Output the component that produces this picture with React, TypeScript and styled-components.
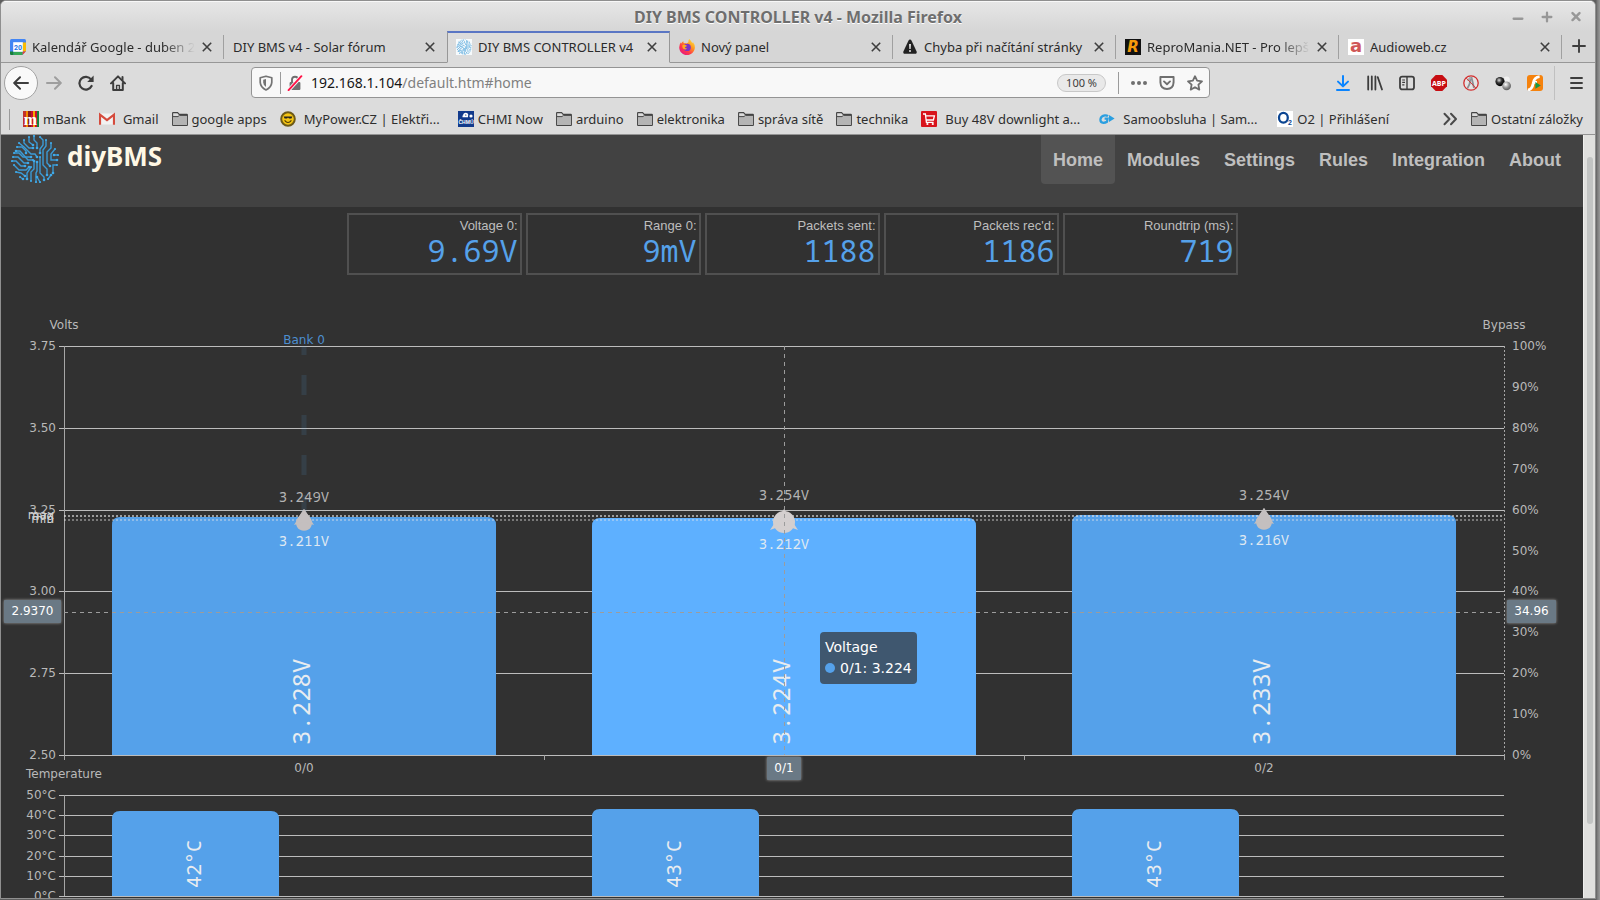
import React, { useEffect, useRef, useState } from "react";
import styled, { createGlobalStyle } from "styled-components";

const UI_FONT = `"Noto Sans", "Open Sans", sans-serif`;
const CHART_FONT = `"DejaVu Sans", Verdana, sans-serif`;
const MONO_FONT = `"Noto Mono", "Noto Sans Mono", "DejaVu Sans Mono", monospace`;
const BLUE = "#55a1ea";

const GlobalStyle = createGlobalStyle`
  * { box-sizing: border-box; }
  html, body { margin: 0; height: 100%; }
  body { background: #8e8e8e; overflow: hidden; font-family: ${UI_FONT}; }
  #root { height: 100%; }
  button, input { font: inherit; color: inherit; }
  button { border: 0; padding: 0; background: none; cursor: pointer; }
  a { color: inherit; text-decoration: none; }
`;

/* ---------- window ---------- */

const Desktop = styled.div`
  height: 100vh;
  padding: 0 4px 1px 0;
  background: linear-gradient(90deg, #5e5e5e calc(100% - 4px), #777 calc(100% - 3px), #999 100%);
`;

const BrowserWindow = styled.div`
  display: flex;
  flex-direction: column;
  height: 100%;
  border: 1px solid #8f8f8f;
  border-radius: 6px 6px 0 0;
  background: #dcdcdc;
  overflow: hidden;
`;

const TitleBar = styled.header`
  flex: none;
  position: relative;
  display: flex;
  align-items: center;
  justify-content: center;
  height: 30px;
  border-top: 1px solid #f8f8f8;
  background: linear-gradient(#e6e6e6, #d6d6d6);
`;

const WindowTitle = styled.h1`
  margin: 0;
  font-size: 16px;
  line-height: 30px;
  font-weight: 700;
  color: #6e6e6e;
  text-shadow: 0 1px 0 #fff;
`;

const WindowButtons = styled.div`
  position: absolute;
  right: 12px;
  top: 8px;
  display: flex;
  gap: 15px;
`;

const IconButton = styled.button<{ $size?: number }>`
  flex: none;
  display: flex;
  align-items: center;
  justify-content: center;
  width: ${(p) => p.$size ?? 16}px;
  height: ${(p) => p.$size ?? 16}px;
`;

/* ---------- tabs ---------- */

const TabStrip = styled.div`
  flex: none;
  display: flex;
  height: 32px;
  background: #d6d6d6;
`;

const Tab = styled.div<{ $active?: boolean; $noLine?: boolean }>`
  position: relative;
  flex: 0 1 223px;
  min-width: 0;
  display: flex;
  align-items: center;
  gap: 6px;
  padding: 0 11px 2px ${(p) => (p.$active ? 8 : 9)}px;
  font-size: 13px;
  color: #2b2b2b;
  background: ${(p) => (p.$active ? "#dcdcdc" : "transparent")};
  border-top: 2px solid ${(p) => (p.$active ? "#5a76c4" : "transparent")};
  border-bottom: 1px solid ${(p) => (p.$active ? "#dcdcdc" : "#979797")};
  ${(p) => p.$active && "border-left: 1px solid #979797; border-right: 1px solid #979797;"}

  &::after {
    content: "";
    display: ${(p) => (p.$active || p.$noLine ? "none" : "block")};
    position: absolute;
    right: 0;
    top: 2px;
    width: 1px;
    height: 24px;
    background: #a0a0a0;
  }
`;

const TabLabel = styled.button<{ $fade?: boolean }>`
  flex: 1;
  min-width: 0;
  height: 26px;
  overflow: hidden;
  white-space: nowrap;
  text-align: left;
  ${(p) => p.$fade && "mask-image: linear-gradient(90deg, #000 calc(100% - 32px), transparent);"}
`;

const NewTab = styled.div`
  flex: 1;
  display: flex;
  align-items: center;
  padding: 0 0 2px 9px;
  border-bottom: 1px solid #979797;
`;

/* ---------- toolbars ---------- */

const NavBar = styled.div`
  flex: none;
  display: flex;
  align-items: center;
  height: 39px;
  padding: 0 8px 0 3px;
`;

const NavButtons = styled.div`
  flex: none;
  display: flex;
  align-items: center;
  gap: 16px;
`;

const BackButton = styled(IconButton)`
  border: 1px solid #a2a2a2;
  border-radius: 50%;
  background: #f9f9f9;
  margin-right: -8px;
`;

const Spring = styled.div`
  flex: 1;
  max-width: 125px;
`;

const UrlBar = styled.form`
  flex: 1 1 959px;
  display: flex;
  align-items: center;
  gap: 12px;
  height: 31px;
  margin: 0 auto 0 0;
  padding: 0 6px;
  border: 1px solid #949494;
  border-radius: 4px;
  background: #f8f8f8;
  max-width: 959px;
`;

const Identity = styled.div`
  display: flex;
  align-items: center;
  gap: 6px;
`;

const UrlField = styled.label`
  flex: 1;
  position: relative;
  display: flex;
  margin-left: -4px;
  font-size: 14px;
  line-height: 22px;
`;

const UrlInput = styled.input`
  width: 100%;
  padding: 0;
  border: 0;
  background: none;
  color: transparent;
`;

const UrlText = styled.span`
  position: absolute;
  inset: 0;
  pointer-events: none;
  color: #808080;
  b { font-weight: 400; color: #161616; }
`;

const ZoomPill = styled.button`
  height: 18px;
  padding: 0 8px;
  border: 1px solid #c8c8c8;
  border-radius: 9px;
  background: #e9e9e9;
  font-size: 11px;
  line-height: 16px;
  color: #3c3c3c;
  white-space: nowrap;
`;

const Divider = styled.span<{ $h: number; $light?: boolean }>`
  flex: none;
  width: 1px;
  height: ${(p) => p.$h}px;
  background: ${(p) => (p.$light ? "#c0c0c0" : "#9b9b9b")};
`;

const Extensions = styled.div`
  flex: none;
  display: flex;
  align-items: center;
  gap: 16px;
  margin-left: 98px;
`;

const ExtensionsEnd = styled.div`
  flex: none;
  display: flex;
  align-items: center;
  gap: 13px;
  margin-left: 11px;
  padding-right: 3px;
`;

const Bookmarks = styled.nav`
  flex: none;
  display: flex;
  align-items: center;
  gap: 13px;
  height: 33px;
  padding: 2px 12px 0 8px;
  border-bottom: 1px solid #949494;
  font-size: 13px;
  line-height: 18px;
  color: #2e2e2e;
  white-space: nowrap;
`;

const Bookmark = styled.a<{ $gap?: number; $long?: boolean }>`
  flex: none;
  display: flex;
  align-items: center;
  gap: ${(p) => p.$gap ?? 4}px;
  width: ${(p) => (p.$long ? "165px" : "auto")};
`;

const BookmarkSpacer = styled.div`
  flex: 1;
`;

/* ---------- page ---------- */

const Viewport = styled.div`
  flex: 1;
  min-height: 0;
  display: flex;
  background: #e0e0de;
`;

const Page = styled.main`
  flex: 1;
  min-width: 0;
  overflow: hidden;
  background: #313131;
  font-family: "Liberation Sans", Arial, sans-serif;
`;

const PageHeader = styled.div`
  display: flex;
  justify-content: space-between;
  align-items: flex-start;
  height: 72px;
  padding: 0 10px;
  background: #424242;
`;

const Brand = styled.a`
  display: flex;
  align-items: flex-start;
  gap: 8px;
  font-family: ${UI_FONT};
  font-size: 26px;
  line-height: 42px;
  font-weight: 700;
  color: #fff8e5;
`;

const Menu = styled.nav`
  display: flex;
`;

const MenuLink = styled.a<{ $active?: boolean }>`
  height: 49px;
  padding: 0 12px;
  border-radius: 0 0 4px 4px;
  background: ${(p) => (p.$active ? "#535353" : "transparent")};
  font-size: 18px;
  line-height: 50px;
  font-weight: 700;
  color: #bfbfbf;
`;

const Stats = styled.dl`
  display: flex;
  justify-content: center;
  gap: 4px;
  margin: 0;
  padding-top: 6px;
`;

const Stat = styled.div`
  width: 175px;
  height: 62px;
  padding: 3px 2px;
  border: 2px solid #505050;
  text-align: right;
`;

const StatLabel = styled.dt`
  font-size: 13px;
  line-height: 15px;
  color: #bebebe;
`;

const StatValue = styled.dd`
  margin: 0;
  font-family: ${MONO_FONT};
  font-size: 30px;
  line-height: 36px;
  color: ${BLUE};
`;

const Scrollbar = styled.div`
  flex: none;
  width: 12px;
  padding: 22px 3px 0;
  border-left: 1px solid #efefed;
`;

const ScrollThumb = styled.div`
  width: 6px;
  height: 90%;
  border-radius: 3px;
  background: #c2c4c3;
`;

const ChartArea = styled.section`
  position: relative;
  svg { display: block; }
`;

const Tooltip = styled.div`
  position: absolute;
  top: 357px;
  padding: 5px;
  border-radius: 4px;
  background: rgba(50, 50, 50, 0.7);
  font-family: ${CHART_FONT};
  font-size: 14px;
  line-height: 21px;
  color: #fff;
  white-space: nowrap;
`;

const TooltipDot = styled.span`
  display: inline-block;
  width: 10px;
  height: 10px;
  margin-right: 5px;
  border-radius: 50%;
  background: ${BLUE};
`;

/* ---------- icons ---------- */

const Close = () => (
  <svg width="10" height="10" viewBox="0 0 10 10">
    <path d="M.8.8l8.4 8.4M9.2.8L.8 9.2" stroke="#3f3f3f" strokeWidth="1.6" />
  </svg>
);

const Folder = () => (
  <svg width="16" height="16" viewBox="0 0 16 16">
    <path d="M.6 13.9V2.1Q.6 1.6 1.1 1.6H5.6L7.2 3.4H14.9Q15.4 3.4 15.4 3.9V13.9Q15.4 14.4 14.9 14.4H1.1Q.6 14.4.6 13.9Z" fill="#dcdcdc" stroke="#444" strokeWidth="1.1" />
    <path d="M1 6H6.2L7.6 4.6H15V14H1Z" fill="#b4b4b4" />
    <path d="M1 5.6H6L7.4 4.4H15" fill="none" stroke="#444" />
  </svg>
);

const CalendarIcon = () => (
  <svg width="16" height="16" viewBox="0 0 16 16">
    <rect width="16" height="16" rx="1.5" fill="#4285f4" />
    <path d="M12.6 3.4H16V12.6H12.6Z" fill="#fbbc04" />
    <path d="M3.4 12.6H12.6V16H3.4Z" fill="#34a853" />
    <path d="M0 12.6H3.4V16H1.5Q0 16 0 14.5Z" fill="#188038" />
    <path d="M12.6 12.6H16L12.6 16Z" fill="#ea4335" />
    <path d="M16 12.6V16H12.6Z" fill="#dcdcdc" />
    <rect x="3.2" y="3.2" width="9.6" height="9.6" fill="#fff" />
    <text x="8" y="10.6" textAnchor="middle" fontSize="7" fontWeight="700" fontFamily="Roboto, sans-serif" fill="#1a73e8">20</text>
  </svg>
);

const FirefoxIcon = () => (
  <svg width="16" height="16" viewBox="0 0 16 16">
    <defs>
      <linearGradient id="ff" x1="1" y1="0" x2="0.2" y2="1">
        <stop offset="0" stopColor="#fff44f" />
        <stop offset=".4" stopColor="#ff9a1f" />
        <stop offset=".7" stopColor="#ff3b47" />
        <stop offset="1" stopColor="#e31587" />
      </linearGradient>
    </defs>
    <path d="M10.2 0C12 1.3 12.2 2.6 13 3.4Q14 4 14.1 3.2Q16 5.6 15.9 8.4C15.7 12.8 12.2 16 8 16S.1 12.6.2 8.2Q.2 5 2 3.2L2.4 4.4Q3.2 2.8 4.4 2.2Q4.2 3.6 5 4.2Q6.6 3.8 7.6 4.4L9.4 3.2Q9.2 1.2 10.2 0Z" fill="url(#ff)" />
    <circle cx="8.2" cy="8.4" r="3.6" fill="#7a35c8" />
    <path d="M3.4 6.2Q5.4 5 8 6.8Q7.2 8 5.8 8Q6.2 9.8 8.2 9.6Q6 11.4 4 9.4Q3 8 3.4 6.2Z" fill="#ffab1f" />
  </svg>
);

const WarningIcon = () => (
  <svg width="16" height="16" viewBox="-1 -1 16 16">
    <path d="M7 -.4Q8 -.4 8.6 .8L13.6 11.4Q14.2 13.8 12 13.8H2Q-.2 13.8.4 11.4L5.4 .8Q6 -.4 7 -.4Z" fill="#222" />
    <path d="M6 4H8L7.7 9H6.3Z" fill="#ddd" />
    <circle cx="7" cy="11" r="1.1" fill="#ddd" />
  </svg>
);

const LetterIcon = ({ bg, fg, ch, italic, size = 15 }: { bg: string; fg: string; ch: string; italic?: boolean; size?: number }) => (
  <svg width="16" height="16" viewBox="0 0 16 16">
    <rect width="16" height="16" fill={bg} />
    <text x="8" y="13" textAnchor="middle" fontSize={size} fontWeight="900" fontStyle={italic ? "italic" : "normal"} fontFamily="'DejaVu Sans', sans-serif" fill={fg}>{ch}</text>
  </svg>
);

const MBankIcon = () => (
  <svg width="16" height="16" viewBox="0 0 16 16">
    <rect width="16" height="16" fill="#c8102e" />
    <rect width="3" height="16" fill="#c4302b" />
    <rect x="3" width="2" height="16" fill="#f08a00" />
    <rect x="5" width="3" height="16" fill="#8b1a1a" />
    <rect x="10" width="2" height="16" fill="#f6a800" />
    <rect x="14" width="2" height="16" fill="#12833c" />
    <text x="7.5" y="14" textAnchor="middle" fontSize="16" fontWeight="700" fontFamily="'Liberation Serif', serif" fill="#fff">m</text>
  </svg>
);

const GmailIcon = () => (
  <svg width="16" height="16" viewBox="0 0 16 16">
    <path d="M1 2.5H15V13.5H1Z" fill="#f2f2f2" />
    <path d="M1 13.8V3.6L8 9.2L15 3.6V13.8" fill="none" stroke="#d54b3d" strokeWidth="2.2" />
  </svg>
);

const SmileIcon = () => (
  <svg width="16" height="16" viewBox="0 0 16 16">
    <circle cx="8" cy="8" r="6.8" fill="#f4c414" stroke="#6d5a17" strokeWidth="2" />
    <path d="M3.6 5.4H12.4L11.4 7.6H9L8 6.4L7 7.6H4.6Z" fill="#222" />
    <path d="M4.6 9.4Q8 13.6 11.4 9.4" fill="none" stroke="#4b3a00" strokeWidth="1.1" />
  </svg>
);

const ChmiIcon = () => (
  <svg width="16" height="16" viewBox="0 0 16 16">
    <rect width="16" height="16" fill="#123a8c" />
    <path d="M4.5 5.4H10M6 4.4A1.6 1.6 0 019.4 4.4" stroke="#fff" strokeWidth="1.8" fill="none" />
    <circle cx="13" cy="5" r="1.6" fill="#fff" />
    <text x="8" y="13" textAnchor="middle" fontSize="5" fontWeight="700" fontFamily="'Liberation Sans', sans-serif" fill="#fff">ČHMÚ</text>
  </svg>
);

const CartIcon = () => (
  <svg width="16" height="16" viewBox="0 0 16 16">
    <rect width="16" height="16" rx="1" fill="#d8141c" />
    <path d="M2 3H4.4L5.4 11.4H12.6M4.8 4.8H13.4L12.4 9H5.2" fill="none" stroke="#fff" strokeWidth="1.3" />
    <circle cx="6.4" cy="13" r="1.1" fill="#fff" />
    <circle cx="11.8" cy="13" r="1.1" fill="#fff" />
  </svg>
);

const GPlayIcon = () => (
  <svg width="16" height="16" viewBox="0 0 16 16">
    <path d="M9 5.2Q7.8 4.2 5.8 4.4Q2 4.8 1.4 8.2Q1.2 11.6 4.4 11.8Q6.4 11.8 8 10.8L8.6 7.6H5.6" fill="none" stroke="#2b9fe0" strokeWidth="2.2" />
    <path d="M10 4L15.6 7.4L10 11Z" fill="#2b9fe0" />
  </svg>
);

const O2Icon = () => (
  <svg width="16" height="16" viewBox="0 0 16 16">
    <rect width="16" height="16" fill="#fff" />
    <ellipse cx="6.4" cy="6.8" rx="4.4" ry="4.9" fill="none" stroke="#0b4592" strokeWidth="2.3" />
    <text x="13" y="14.4" textAnchor="middle" fontSize="7" fontWeight="700" fontFamily="'Liberation Sans', sans-serif" fill="#0b4592">2</text>
  </svg>
);

const TRACES: number[][][] = [
  [[3, 18], [8, 18], [12, 22], [20, 22]],
  [[2, 22], [7, 22], [13, 28], [17, 28]],
  [[1, 26], [5, 26], [10, 31], [14, 31]],
  [[3, 30], [8, 35], [15, 35], [18, 32]],
  [[6, 12], [11, 12], [15, 16], [15, 18]],
  [[8, 8], [13, 12], [20, 19], [24, 19], [26, 22]],
  [[13, 5], [13, 8], [18, 13], [22, 13]],
  [[18, 2], [18, 7], [22, 10]],
  [[23, 1], [23, 5], [26, 8], [26, 13]],
  [[29, 2], [32, 5], [32, 10], [29, 14], [29, 18]],
  [[35, 5], [35, 11], [32, 15], [32, 30], [36, 34], [36, 40]],
  [[40, 8], [40, 13], [36, 17], [36, 28], [39, 31]],
  [[44, 14], [40, 19], [40, 25], [46, 25]],
  [[47, 20], [43, 20]],
  [[46, 30], [42, 30], [42, 38]],
  [[5, 37], [10, 38], [14, 41]],
  [[22, 25], [17, 25], [9, 16], [5, 16]],
  [[20, 32], [16, 38], [16, 44]],
  [[20, 46], [20, 37], [23, 34], [23, 26]],
  [[25, 47], [25, 38], [26, 36], [26, 27]],
  [[29, 22], [29, 38], [33, 42], [33, 45]],
  [[29, 47], [26, 42]],
  [[37, 44], [40, 40]],
  [[9, 42], [12, 44]],
];

const BrandLogo = ({ size = 48 }: { size?: number }) => (
  <svg width={size} height={size} viewBox="0 0 48 48" fill="none" stroke="#3b9bd6" strokeWidth="1.4">
    {TRACES.map((t, i) => (
      <React.Fragment key={i}>
        <polyline points={t.map((p) => p.join(",")).join(" ")} />
        <circle cx={t[0][0]} cy={t[0][1]} r="1.1" fill="#3fa9e8" stroke="none" />
        <circle cx={t[t.length - 1][0]} cy={t[t.length - 1][1]} r="1.3" fill="#3fa9e8" stroke="none" />
      </React.Fragment>
    ))}
  </svg>
);

const BrandFavicon = () => (
  <svg width="16" height="16" viewBox="0 0 48 48" fill="none" stroke="#7fbde4" strokeWidth="3">
    <rect width="48" height="48" fill="#f6fafc" stroke="none" />
    {TRACES.map((t, i) => (
      <polyline key={i} points={t.map((p) => p.join(",")).join(" ")} />
    ))}
  </svg>
);

const line = (d: string, color = "#3d3d3d", w = 2, size = 16) => (
  <svg width={size} height={size} viewBox="0 0 16 16" fill="none" stroke={color} strokeWidth={w} strokeLinecap="round" strokeLinejoin="round">
    <path d={d} />
  </svg>
);

const HomeIcon = () => (
  <svg width="16" height="16" viewBox="0 0 16 16" fill="none" stroke="#3d3d3d" strokeWidth="2" strokeLinejoin="round" strokeLinecap="round">
    <path d="M1 8.4L8 1.4L15 8.4M3.2 8V15H12.8V8" />
    <path d="M6.6 14.5V10.4H9.4V14.5" strokeWidth="1.4" />
    <path d="M12.5 2V5" />
  </svg>
);

const ReloadIcon = () => (
  <svg width="16" height="16" viewBox="0 0 16 16" fill="none" stroke="#3d3d3d" strokeWidth="2.2">
    <path d="M13.6 11A6.4 6.4 0 1113 4.4" strokeLinecap="round" />
    <path d="M15.6 .6V7H9.2Z" fill="#3d3d3d" stroke="none" />
  </svg>
);

const ShieldIcon = () => (
  <svg width="16" height="16" viewBox="0 0 16 16" fill="none" stroke="#747474" strokeWidth="1.7">
    <path d="M8 1.2L13.8 2.8V7.4Q13.4 12.4 8 15Q2.6 12.4 2.2 7.4V2.8Z" strokeLinejoin="round" />
    <path d="M8 4V12Q5.4 10.4 5.2 7.4V4.8Z" fill="#747474" stroke="none" />
  </svg>
);

const LockIcon = () => (
  <svg width="16" height="16" viewBox="0 0 16 16" fill="none">
    <rect x="2.6" y="7" width="10.8" height="8" rx="1" fill="#6f6f6f" />
    <path d="M5 7V4.6Q5 1.8 8 1.8Q11 1.8 11 4.6V7" stroke="#6f6f6f" strokeWidth="1.9" />
    <path d="M1.6 15.2L14.4 1.2" stroke="#f8f8f8" strokeWidth="3.6" />
    <path d="M1.6 15.2L14.4 1.2" stroke="#ff1447" strokeWidth="1.9" strokeLinecap="round" />
  </svg>
);

const DotsIcon = () => (
  <svg width="16" height="16" viewBox="0 0 16 16" fill="#6f6f6f">
    <circle cx="2" cy="8" r="2" /><circle cx="8" cy="8" r="2" /><circle cx="14" cy="8" r="2" />
  </svg>
);

const LibraryIcon = () => (
  <svg width="16" height="16" viewBox="0 0 16 16" stroke="#3d3d3d" strokeWidth="1.8" strokeLinecap="round">
    <path d="M1.2 1.5V14.5M4.8 1.5V14.5M8.4 1.5V14.5M10.8 2.2L15 14.5" />
  </svg>
);

const SidebarIcon = () => (
  <svg width="16" height="16" viewBox="0 0 16 16" fill="none" stroke="#3d3d3d" strokeWidth="1.8">
    <rect x="1" y="1.6" width="14" height="12.8" rx="2.2" />
    <path d="M8 2V14" strokeWidth="1.4" />
    <path d="M3.2 5H6M3.2 7.4H6M3.2 9.8H5.4" strokeWidth="1.2" />
  </svg>
);

const AbpIcon = () => (
  <svg width="16" height="16" viewBox="0 0 16 16">
    <path d="M4.7 0H11.3L16 4.7V11.3L11.3 16H4.7L0 11.3V4.7Z" fill="#c70d12" />
    <text x="8" y="10.5" textAnchor="middle" fontSize="7" fontWeight="700" fontFamily="'Open Sans', sans-serif" fill="#fff">ABP</text>
  </svg>
);

const BlockIcon = () => (
  <svg width="16" height="16" viewBox="0 0 16 16" fill="none">
    <circle cx="8" cy="8" r="7" fill="#e6e4e4" />
    <path d="M7.6 2L6.6 9L4.4 13.4M8.4 2L11 13" stroke="#8d8f93" strokeWidth="1.8" />
    <path d="M4.4 5.6L8 2.6" stroke="#a9abb0" strokeWidth="2" />
    <circle cx="8" cy="8" r="7.2" stroke="#d22f2f" strokeWidth="1.3" />
    <path d="M3.2 3L12.8 13" stroke="#d22f2f" strokeWidth=".9" />
  </svg>
);

const SpheresIcon = () => (
  <svg width="16" height="16" viewBox="0 0 16 16">
    <defs>
      <radialGradient id="dark" cx=".4" cy=".35" r=".6"><stop offset="0" stopColor="#ddd" /><stop offset=".5" stopColor="#333" /><stop offset="1" stopColor="#000" /></radialGradient>
      <radialGradient id="grey" cx=".4" cy=".35" r=".6"><stop offset="0" stopColor="#fff" /><stop offset=".6" stopColor="#999" /><stop offset="1" stopColor="#666" /></radialGradient>
    </defs>
    <circle cx="11.6" cy="4.6" r="3.2" fill="#f1f1f1" />
    <circle cx="5" cy="6.6" r="4.6" fill="url(#dark)" />
    <circle cx="11.6" cy="10.8" r="4.4" fill="url(#grey)" />
  </svg>
);

const FlashIcon = () => (
  <svg width="16" height="16" viewBox="0 0 16 16">
    <rect width="16" height="16" rx="3" fill="#f5820d" />
    <path d="M1 15Q5 14.4 6 9Q7 2 12.6 1.6M5.4 7.4H10" stroke="#fff" strokeWidth="2.8" fill="none" />
    <path d="M8.4 7L13.8 10.4L8.4 13.8Z" fill="#149a46" />
  </svg>
);

/* ---------- chart ---------- */

const CELLS = [
  { name: "0/0", volts: 3.228, max: "3.249V", min: "3.211V", temp: 42 },
  { name: "0/1", volts: 3.224, max: "3.254V", min: "3.212V", temp: 43, hover: true },
  { name: "0/2", volts: 3.233, max: "3.254V", min: "3.216V", temp: 43 },
];

const PLOT = { left: 63, rightPad: 79, top: 71, bottom: 480, tempTop: 520, tempBottom: 621 };
const CHART_HEIGHT = 640;

const voltY = (v: number) => Math.round(PLOT.bottom - ((v - 2.5) / 1.25) * (PLOT.bottom - PLOT.top));
const tempY = (t: number) => Math.round(PLOT.tempBottom - (t / 50) * (PLOT.tempBottom - PLOT.tempTop));

const roundedBar = (x: number, y: number, w: number, bottom: number) =>
  `M${x} ${bottom}V${y + 8}Q${x} ${y} ${x + 8} ${y}H${x + w - 8}Q${x + w} ${y} ${x + w} ${y + 8}V${bottom}Z`;

function useWidth(initial: number) {
  const ref = useRef<HTMLElement>(null);
  const [width, setWidth] = useState(initial);
  useEffect(() => {
    if (!ref.current) return;
    const update = () => ref.current && setWidth(ref.current.clientWidth);
    update();
    const observer = new ResizeObserver(update);
    observer.observe(ref.current);
    return () => observer.disconnect();
  }, []);
  return [ref, width] as const;
}

const AxisBadge = ({ x, y, w, label }: { x: number; y: number; w: number; label: string }) => (
  <g>
    <rect x={x} y={y} width={w} height="23" rx="1" fill="#6a7985" filter="url(#badgeShadow)" />
    <text x={x + w / 2} y={y + 15} textAnchor="middle" fill="#fff">{label}</text>
  </g>
);

/* Max/min marker: a drop normally, a full disc while its cell is hovered; both carry two small wings. */
const Marker = ({ x, y, hover }: { x: number; y: number; hover?: boolean }) =>
  hover ? (
    <g fill="#d4cfcf">
      <circle cx={x} cy={y} r="11" />
      <path d={`M${x} ${y - 13}L${x + 14} ${y + 8}L${x} ${y + 3}L${x - 14} ${y + 8}Z`} />
    </g>
  ) : (
    <g fill="#c4bfbf">
      <path d={`M${x} ${y - 12}L${x + 7} ${y - 2}A8 8 0 1 1 ${x - 7} ${y - 2}Z`} />
      <path d={`M${x} ${y - 12}L${x + 10} ${y + 4}L${x} ${y + 1}L${x - 10} ${y + 4}Z`} />
    </g>
  );

const CellChart = () => {
  const [ref, width] = useWidth(1582);
  const right = width - PLOT.rightPad;
  const band = (right - PLOT.left) / CELLS.length;
  const barWidth = Math.round(band * 0.8);
  const tempWidth = Math.round(band * 0.347);
  const pointerY = 337;
  const pointerX = Math.round(PLOT.left + band * 1.5);
  const { left, top, bottom } = PLOT;

  return (
    <ChartArea ref={ref}>
      <svg width={width} height={CHART_HEIGHT} fontFamily={CHART_FONT} fontSize="12" fill="#b9b9b9">
        <defs>
          <filter id="badgeShadow" x="-20%" y="-30%" width="140%" height="160%">
            <feDropShadow dx="0" dy="0" stdDeviation="1.5" floodColor="#aaa" floodOpacity=".9" />
          </filter>
        </defs>

        <text x={left} y="54" textAnchor="middle">Volts</text>
        <text x={right} y="54" textAnchor="middle">Bypass</text>
        <text x={left} y="503" textAnchor="middle">Temperature</text>

        {[3.75, 3.5, 3.25, 3, 2.75, 2.5].map((v) => (
          <g key={v}>
            <line x1={left - 5} x2={right} y1={voltY(v)} y2={voltY(v)} stroke="#bcbcbc" shapeRendering="crispEdges" />
            <text x={left - 8} y={voltY(v) + 4} textAnchor="end">{v.toFixed(2)}</text>
          </g>
        ))}
        {[0, 10, 20, 30, 40, 50, 60, 70, 80, 90, 100].map((p) => (
          <text key={p} x={right + 8} y={Math.round(bottom - (p / 100) * (bottom - top)) + 4}>{p}%</text>
        ))}
        {[0, 10, 20, 30, 40, 50].map((t) => (
          <g key={t}>
            <line x1={left - 5} x2={right} y1={tempY(t)} y2={tempY(t)} stroke="#bcbcbc" shapeRendering="crispEdges" />
            <text x={left - 8} y={tempY(t) + 4} textAnchor="end">{t}°C</text>
          </g>
        ))}
        <g stroke="#a6a6a6" shapeRendering="crispEdges">
          <line x1={left} x2={left} y1={top} y2={bottom + 5} />
          <line x1={left} x2={left} y1={PLOT.tempTop} y2={PLOT.tempBottom} />
          <line x1={right} x2={right} y1={top} y2={bottom} strokeDasharray="2 2" />
          {[1, 2, 3].map((i) => (
            <line key={i} x1={Math.round(left + band * i)} x2={Math.round(left + band * i)} y1={bottom} y2={bottom + 5} />
          ))}
        </g>

        <line x1={left + band / 2} x2={left + band / 2} y1={bottom} y2={top} stroke={BLUE} strokeOpacity=".12" strokeWidth="5" strokeDasharray="20 20" />
        <text x={left + band / 2} y="69" textAnchor="middle" fill="#4d8fd0">Bank 0</text>

        {CELLS.map((c, i) => {
          const x = Math.round(left + band * i + band * 0.1);
          const fill = c.hover ? "#5eb0ff" : BLUE;
          return (
            <g key={c.name}>
              <path d={roundedBar(x, voltY(c.volts), barWidth, bottom)} fill={fill} />
              <path d={roundedBar(x, tempY(c.temp), tempWidth, PLOT.tempBottom)} fill={BLUE} />
            </g>
          );
        })}

        <g stroke="#e6e6e6" strokeDasharray="2 2" strokeWidth="2">
          <line x1={left} x2={right} y1="241" y2="241" strokeOpacity=".6" />
          <line x1={left} x2={right} y1="245" y2="245" strokeOpacity=".4" />
        </g>
        <g fill="#d0d0d0" textAnchor="end">
          <text x="53" y="244">max</text>
          <text x="53" y="245">avg</text>
          <text x="53" y="248">min</text>
        </g>

        {CELLS.map((c, i) => {
          const cx = Math.round(left + band * (i + 0.5));
          const cy = c.hover ? 247 : i === 0 ? 246 : 245;
          const tx = Math.round(left + band * i + band * 0.1 + tempWidth / 2);
          return (
            <g key={c.name}>
              <Marker x={cx} y={cy} hover={c.hover} />
              <g fontFamily={MONO_FONT} fontSize="14" textAnchor="middle">
                <text x={cx} y={i === 0 ? 227 : 225} fill="#b4b4b4">{c.max}</text>
                <text x={cx} y={cy + (c.hover ? 27 : 25)} fill="#dfe8f2">{c.min}</text>
              </g>
              <g fontFamily={MONO_FONT} fill="#e8ecf0">
                <text fontSize="24" transform={`translate(${cx + 6} 470) rotate(-90)`}>{c.volts.toFixed(3)}V</text>
                <text fontSize="20" transform={`translate(${tx + 5} 613) rotate(-90)`}>{c.temp}°C</text>
              </g>
              {!c.hover && <text x={cx} y="497" textAnchor="middle">{c.name}</text>}
            </g>
          );
        })}

        <g stroke="#9c9c9c" strokeDasharray="4 4" shapeRendering="crispEdges">
          <line x1={left} x2={right} y1={pointerY} y2={pointerY} />
          <line x1={pointerX} x2={pointerX} y1={top} y2={bottom} />
        </g>
        <AxisBadge x={3} y={325} w={57} label="2.9370" />
        <AxisBadge x={right + 3} y={325} w={49} label="34.96" />
        <AxisBadge x={pointerX - 17} y={482} w={34} label="0/1" />
      </svg>
      <Tooltip role="tooltip" style={{ left: pointerX + 36 }}>
        Voltage
        <br />
        <TooltipDot />
        0/1: 3.224
      </Tooltip>
    </ChartArea>
  );
};

/* ---------- app ---------- */

const TABS = [
  { label: "Kalendář Google - duben 2", icon: <CalendarIcon />, fade: true },
  { label: "DIY BMS v4 - Solar fórum", noLine: true },
  { label: "DIY BMS CONTROLLER v4", icon: <BrandFavicon />, active: true },
  { label: "Nový panel", icon: <FirefoxIcon /> },
  { label: "Chyba při načítání stránky", icon: <WarningIcon /> },
  { label: "ReproMania.NET - Pro lepš", icon: <LetterIcon bg="#111" fg="#f59a0c" ch="R" italic />, fade: true },
  { label: "Audioweb.cz", icon: <LetterIcon bg="#fff" fg="#cf5757" ch="a" size={18} /> },
];

const BOOKMARKS = [
  { label: "mBank", icon: <MBankIcon /> },
  { label: "Gmail", icon: <GmailIcon />, gap: 8 },
  { label: "google apps", icon: <Folder /> },
  { label: "MyPower.CZ | Elektři...", icon: <SmileIcon />, gap: 8, long: true },
  { label: "CHMI Now", icon: <ChmiIcon /> },
  { label: "arduino", icon: <Folder /> },
  { label: "elektronika", icon: <Folder /> },
  { label: "správa sítě", icon: <Folder /> },
  { label: "technika", icon: <Folder /> },
  { label: "Buy 48V downlight a...", icon: <CartIcon />, gap: 8, long: true },
  { label: "Samoobsluha | Sam...", icon: <GPlayIcon />, gap: 8, long: true },
  { label: "O2 | Přihlášení", icon: <O2Icon /> },
];

const STATS = [
  ["Voltage 0:", "9.69V"],
  ["Range 0:", "9mV"],
  ["Packets sent:", "1188"],
  ["Packets rec'd:", "1186"],
  ["Roundtrip (ms):", "719"],
];

export default function App() {
  return (
    <Desktop>
      <GlobalStyle />
      <BrowserWindow>
        <TitleBar>
          <WindowTitle>DIY BMS CONTROLLER v4 - Mozilla Firefox</WindowTitle>
          <WindowButtons>
            <IconButton aria-label="Minimize" $size={14}>{line("M3 10H13", "#979797", 2.6, 14)}</IconButton>
            <IconButton aria-label="Maximize" $size={14}>{line("M3 8H13M8 3V13", "#979797", 2.6, 14)}</IconButton>
            <IconButton aria-label="Close" $size={14}>{line("M4 3.5L12 11.5M12 3.5L4 11.5", "#979797", 2.8, 14)}</IconButton>
          </WindowButtons>
        </TitleBar>

        <TabStrip>
          {TABS.map((t) => (
            <Tab key={t.label} $active={t.active} $noLine={t.noLine}>
              {t.icon}
              <TabLabel $fade={t.fade}>{t.label}</TabLabel>
              <IconButton aria-label="Close tab" $size={12}><Close /></IconButton>
            </Tab>
          ))}
          <NewTab>
            <IconButton aria-label="New tab">{line("M8 2V14M2 8H14", "#3d3d3d", 1.9)}</IconButton>
          </NewTab>
        </TabStrip>

        <NavBar>
          <NavButtons>
            <BackButton aria-label="Back" $size={34}>{line("M15 8H1.5M7 2.2L1.2 8L7 13.8")}</BackButton>
            <IconButton aria-label="Forward">{line("M1 8H14.5M9 2.2L14.8 8L9 13.8", "#9e9e9e")}</IconButton>
            <IconButton aria-label="Reload"><ReloadIcon /></IconButton>
            <IconButton aria-label="Home page"><HomeIcon /></IconButton>
          </NavButtons>
          <Spring />
          <UrlBar>
            <Identity>
              <ShieldIcon />
              <Divider $h={22} />
              <LockIcon />
            </Identity>
            <UrlField>
              <UrlInput aria-label="Address" defaultValue="" />
              <UrlText><b>192.168.1.104</b>/default.htm#home</UrlText>
            </UrlField>
            <ZoomPill type="button">100 %</ZoomPill>
            <Divider $h={22} />
            <IconButton type="button" aria-label="Page actions"><DotsIcon /></IconButton>
            <IconButton type="button" aria-label="Save to Pocket">{line("M1.4 2H14.6V7.4Q14.2 14 8 14Q1.8 14 1.4 7.4ZM5 6.4L8 9.2L11 6.4", "#6f6f6f", 1.9)}</IconButton>
            <IconButton type="button" aria-label="Bookmark">{line("M8 1.2L10.1 5.7L15 6.3L11.4 9.7L12.3 14.6L8 12.2L3.7 14.6L4.6 9.7L1 6.3L5.9 5.7Z", "#6f6f6f", 1.8)}</IconButton>
          </UrlBar>
          <Extensions>
            <IconButton aria-label="Downloads">{line("M8 1V11M3 6.6L8 11.4L13 6.6M2 15H14", "#0a84ff", 2)}</IconButton>
            <IconButton aria-label="Library"><LibraryIcon /></IconButton>
            <IconButton aria-label="Sidebars"><SidebarIcon /></IconButton>
            <IconButton aria-label="Adblock Plus"><AbpIcon /></IconButton>
            <IconButton aria-label="Blocker"><BlockIcon /></IconButton>
            <IconButton aria-label="Containers"><SpheresIcon /></IconButton>
            <IconButton aria-label="Flash"><FlashIcon /></IconButton>
          </Extensions>
          <ExtensionsEnd>
            <Divider $h={34} $light />
            <IconButton aria-label="Menu">{line("M3 3H14M3 8H14M3 13H14", "#3d3d3d", 1.9)}</IconButton>
          </ExtensionsEnd>
        </NavBar>

        <Bookmarks aria-label="Bookmarks">
          <Divider $h={21} />
          {BOOKMARKS.map((b) => (
            <Bookmark key={b.label} href="#" $gap={b.gap} $long={b.long}>{b.icon}{b.label}</Bookmark>
          ))}
          <BookmarkSpacer />
          <IconButton aria-label="More bookmarks">{line("M2.5 2.8L7.5 8L2.5 13.2M9 2.8L14 8L9 13.2", "#4a4a4a", 2)}</IconButton>
          <Bookmark href="#"><Folder />Ostatní záložky</Bookmark>
        </Bookmarks>

        <Viewport>
          <Page>
            <PageHeader>
              <Brand href="#home"><BrandLogo />diyBMS</Brand>
              <Menu>
                {["Home", "Modules", "Settings", "Rules", "Integration", "About"].map((m) => (
                  <MenuLink key={m} href={`#${m.toLowerCase()}`} $active={m === "Home"}>{m}</MenuLink>
                ))}
              </Menu>
            </PageHeader>
            <Stats>
              {STATS.map(([label, value]) => (
                <Stat key={label}>
                  <StatLabel>{label}</StatLabel>
                  <StatValue>{value}</StatValue>
                </Stat>
              ))}
            </Stats>
            <CellChart />
          </Page>
          <Scrollbar>
            <ScrollThumb />
          </Scrollbar>
        </Viewport>
      </BrowserWindow>
    </Desktop>
  );
}
